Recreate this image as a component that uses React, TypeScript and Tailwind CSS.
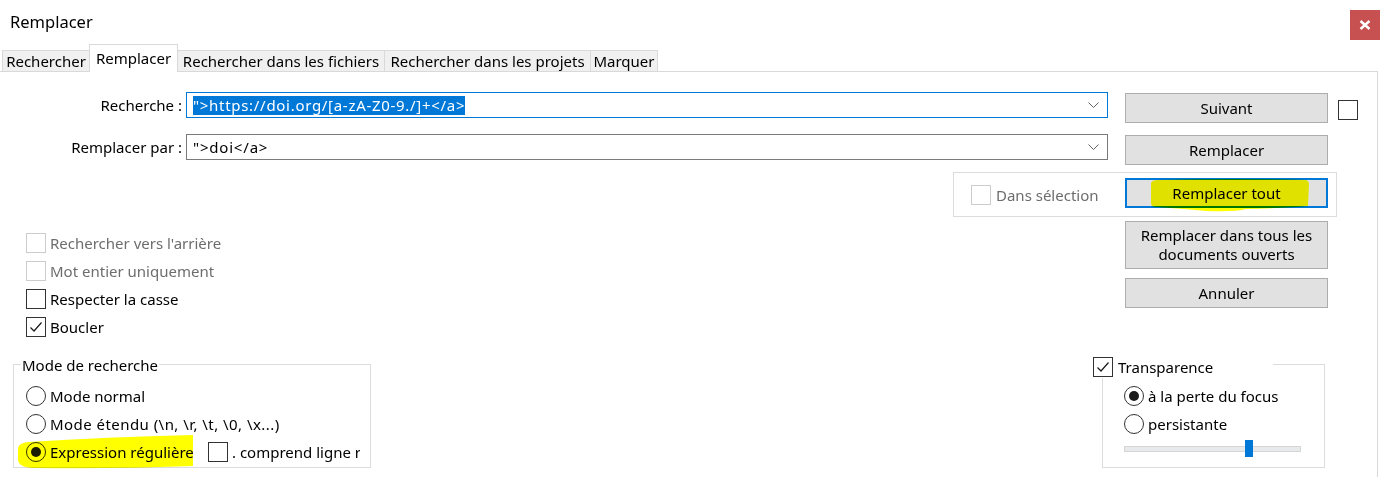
import React from "react";

function CheckBox({ checked = false, disabled = false }: { checked?: boolean; disabled?: boolean }) {
  return (
    <div
      className={
        disabled
          ? "w-[20px] h-[20px] shrink-0 border border-[#cccccc] bg-white"
          : "w-[20px] h-[20px] shrink-0 border border-[#333333] bg-white flex items-center justify-center"
      }
    >
      {checked && (
        <svg width="16" height="16" viewBox="0 0 16 16">
          <path d="M2.5 8.5 L6 12 L13.5 3.5" fill="none" stroke="#1a1a1a" strokeWidth="1.2" />
        </svg>
      )}
    </div>
  );
}

function Radio({ checked = false }: { checked?: boolean }) {
  return (
    <div className="w-[20px] h-[20px] shrink-0 rounded-full border border-[#333333] flex items-center justify-center">
      {checked && <div className="w-[10px] h-[10px] rounded-full bg-[#1a1a1a]" />}
    </div>
  );
}

function Chevron() {
  return (
    <svg width="11" height="7" viewBox="0 0 11 7" className="shrink-0">
      <path d="M0.5 0.5 L5.5 5.5 L10.5 0.5" fill="none" stroke="#606060" strokeWidth="1" />
    </svg>
  );
}

function Btn({ children, className }: { children: React.ReactNode; className: string }) {
  return (
    <div
      className={
        "flex items-center justify-center text-center bg-[#e1e1e1] border border-[#adadad] leading-[19px] shrink-0 " +
        className
      }
    >
      {children}
    </div>
  );
}

export default function App() {
  return (
    <div className="relative w-[1380px] h-[477px] overflow-hidden bg-white text-[15px] leading-[20px] text-black font-['Noto_Sans',sans-serif]">
      {/* Title bar */}
      <div className="flex h-[44px] items-start justify-between">
        <div className="pl-[10px] pt-[11px] text-[16.5px] leading-[22px]">Remplacer</div>
        <div className="mt-[10px] w-[30px] h-[30px] bg-[#c75050] flex items-center justify-center">
          <svg width="12" height="10" viewBox="0 0 12 10">
            <path d="M1.5 1 L10.5 9 M10.5 1 L1.5 9" stroke="#ffffff" strokeWidth="2.4" />
          </svg>
        </div>
      </div>

      {/* Tabs */}
      <div className="relative z-10 flex h-[28px] items-end pl-[2px]">
        <div className="h-[22px] w-[87px] border-t border-l border-b border-[#d9d9d9] bg-[#f0f0f0] flex items-center justify-center whitespace-nowrap">
          Rechercher
        </div>
        <div className="h-[28px] w-[89px] border-t border-l border-r border-[#d9d9d9] bg-white flex items-start justify-center pt-[3px] whitespace-nowrap">
          Remplacer
        </div>
        <div className="h-[22px] w-[206px] border-t border-b border-[#d9d9d9] bg-[#f0f0f0] flex items-center justify-center whitespace-nowrap">
          Rechercher dans les fichiers
        </div>
        <div className="h-[22px] w-[206px] border-t border-l border-b border-[#d9d9d9] bg-[#f0f0f0] flex items-center justify-center whitespace-nowrap">
          Rechercher dans les projets
        </div>
        <div className="h-[22px] w-[68px] border-t border-l border-r border-b border-[#d9d9d9] bg-[#f0f0f0] flex items-center justify-center whitespace-nowrap">
          Marquer
        </div>
      </div>

      {/* Panel */}
      <div className="-mt-px w-[1378px] h-[407px] border-t border-r border-[#d9d9d9]">
        {/* Row A */}
        <div className="mt-[20px] flex items-start">
          <div className="w-[182px] h-[26px] flex items-center justify-end whitespace-nowrap">Recherche :</div>
          <div className="ml-[4px] w-[922px] h-[26px] border border-[#0078d7] flex items-center pl-[6px] pr-[8px]">
            <div className="flex-1 whitespace-nowrap">
              <span className="bg-[#0078d7] text-white leading-[19px] inline-block tracking-[0.7px]">
                {'">https://doi.org/[a-zA-Z0-9./]+</a>'}
              </span>
            </div>
            <Chevron />
          </div>
          <Btn className="ml-[17px] mt-[1px] w-[203px] h-[30px]">Suivant</Btn>
          <div className="ml-[10px] mt-[8px]">
            <CheckBox />
          </div>
        </div>

        {/* Row B */}
        <div className="mt-[11px] flex items-start">
          <div className="w-[182px] h-[26px] flex items-center justify-end whitespace-nowrap">Remplacer par :</div>
          <div className="ml-[4px] w-[922px] h-[26px] border border-[#7a7a7a] flex items-center pl-[6px] pr-[8px]">
            <div className="flex-1 whitespace-nowrap tracking-[0.8px]">{'">doi</a>'}</div>
            <Chevron />
          </div>
          <Btn className="ml-[17px] mt-[1px] w-[203px] h-[30px]">Remplacer</Btn>
        </div>

        {/* Row C */}
        <div className="mt-[7px] ml-[953px] w-[384px] h-[45px] border border-[#dcdcdc] flex items-start">
          <div className="ml-[17px] mt-[12px] h-[20px] flex items-center">
            <CheckBox disabled />
            <span className="ml-[5px] text-[#6d6d6d] whitespace-nowrap">Dans sélection</span>
          </div>
          <div className="ml-auto mr-[8px] mt-[5px] w-[203px] h-[30px] border-2 border-[#0078d7] bg-[#e1e1e1] flex items-center justify-center">
            Remplacer tout
          </div>
        </div>

        {/* Lower section */}
        <div className="flex">
          {/* Left column */}
          <div className="w-[1093px] pt-[12px]">
            <div className="pl-[26px]">
              <div className="h-[28px] flex items-center">
                <CheckBox disabled />
                <span className="ml-[4px] text-[#6d6d6d]">Rechercher vers l'arrière</span>
              </div>
              <div className="h-[28px] flex items-center">
                <CheckBox disabled />
                <span className="ml-[4px] text-[#6d6d6d]">Mot entier uniquement</span>
              </div>
              <div className="h-[28px] flex items-center">
                <CheckBox />
                <span className="ml-[4px]">Respecter la casse</span>
              </div>
              <div className="h-[28px] flex items-center">
                <CheckBox checked />
                <span className="ml-[4px]">Boucler</span>
              </div>
            </div>

            <div className="relative ml-[13px] mt-[23px] w-[358px] h-[104px] border border-[#dcdcdc] pt-[17px] pl-[12px]">
              <div className="absolute left-[7px] top-[-10px] bg-white px-[1px] leading-[20px]">Mode de recherche</div>
              <div className="h-[28px] flex items-center">
                <Radio />
                <span className="ml-[4px]">Mode normal</span>
              </div>
              <div className="h-[28px] flex items-center">
                <Radio />
                <span className="ml-[4px] whitespace-nowrap tracking-[0.45px]">
                  {"Mode étendu (\\n, \\r, \\t, \\0, \\x...)"}
                </span>
              </div>
              <div className="h-[28px] flex items-center">
                <div className="w-[182px] flex items-center">
                  <Radio checked />
                  <span className="ml-[4px] whitespace-nowrap">Expression régulière</span>
                </div>
                <CheckBox />
                <span className="ml-[4px] w-[128px] overflow-hidden whitespace-nowrap">. comprend ligne retour</span>
              </div>
            </div>
          </div>

          {/* Right column */}
          <div className="pt-[4px] flex flex-col items-start">
            <Btn className="ml-[32px] w-[203px] h-[48px]">
              Remplacer dans tous les
              <br />
              documents ouverts
            </Btn>
            <Btn className="ml-[32px] mt-[9px] w-[203px] h-[30px]">Annuler</Btn>

            <div className="relative ml-[9px] mt-[56px] w-[223px] h-[104px] border border-[#dcdcdc] pt-[17px] pl-[21px]">
              <div className="absolute left-[-10px] top-[-8px] w-[180px] h-[21px] bg-white flex items-start">
                <CheckBox checked />
                <span className="ml-[5px] leading-[20px]">Transparence</span>
              </div>
              <div className="h-[28px] flex items-center">
                <Radio checked />
                <span className="ml-[4px]">à la perte du focus</span>
              </div>
              <div className="h-[28px] flex items-center">
                <Radio />
                <span className="ml-[4px]">persistante</span>
              </div>
              <div className="relative mt-[2px] w-[177px] h-[17px]">
                <div className="absolute left-0 right-0 top-[6px] h-[6px] bg-[#e7eaea] border border-[#d6d6d6]" />
                <div className="absolute left-[121px] top-0 w-[8px] h-[17px] bg-[#0078d7]" />
              </div>
            </div>
          </div>
        </div>
      </div>

      {/* Highlighter marks */}
      <svg
        className="absolute left-[1146px] top-[176px] mix-blend-multiply pointer-events-none"
        width="168"
        height="40"
        viewBox="0 0 168 40"
      >
        <path
          d="M5 7 Q6 4 12 4 Q90 2 160 4 Q163 5 163 8 L162 30 Q140 32 100 33 Q90 36 60 35 Q40 33 10 31 Q5 31 5 27 Z"
          fill="#ffff00"
        />
      </svg>
      <svg
        className="absolute left-[16px] top-[432px] mix-blend-multiply pointer-events-none"
        width="182"
        height="38"
        viewBox="0 0 182 38"
      >
        <path d="M2 16 Q3 11 12 10 Q90 5 177 3 L177 34 Q100 37 20 36 Q3 36 2 28 Z" fill="#ffff00" />
      </svg>
    </div>
  );
}
